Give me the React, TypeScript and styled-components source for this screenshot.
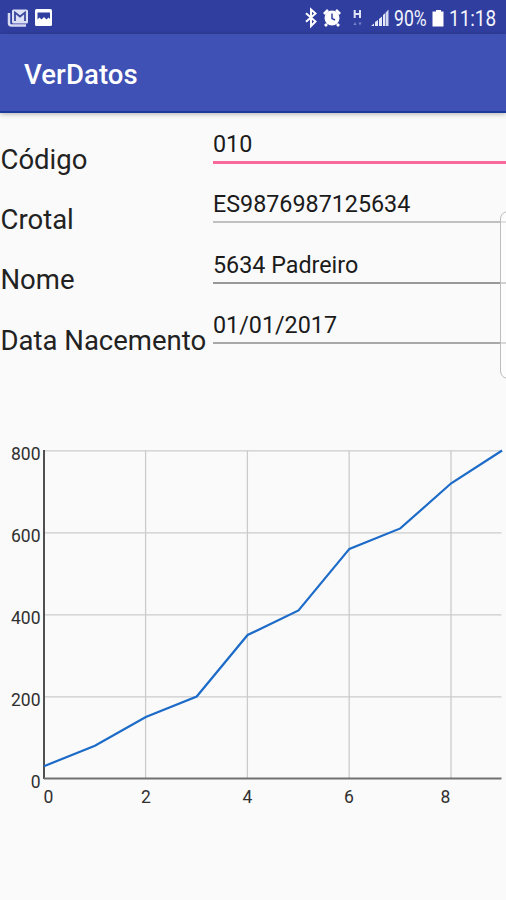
import React from 'react';
import styled, { createGlobalStyle } from 'styled-components';

const GlobalStyle = createGlobalStyle`
  * { box-sizing: border-box; }
  body { margin: 0; background: #fafafa; font-family: Roboto, sans-serif; }
`;

const Screen = styled.main`
  position: relative;
  width: 506px;
  height: 900px;
  overflow: hidden;
  background: #fafafa;
`;

const StatusBar = styled.header`
  display: flex;
  align-items: center;
  height: 34px;
  padding: 1px 10px 0 7px;
  background: #303f9f;
  color: #f3f4fc;
`;

const StatusIcons = styled.svg`
  display: block;
  flex: none;
`;

const Spacer = styled.div`
  flex: 1;
`;

const StatusText = styled.span<{ $width: number; $squeeze: number }>`
  width: ${(p) => p.$width}px;
  padding-top: 2px;
  font-size: 22px;
  line-height: 32px;
  white-space: nowrap;
  transform: scaleX(${(p) => p.$squeeze});
  transform-origin: left center;
`;

const AppBar = styled.div`
  display: flex;
  align-items: center;
  height: 79px;
  padding: 5px 24px 0;
  background: #3f51b5;
  border-bottom: 2px solid #1d3c9a;
  box-shadow: 0 1px 5px rgba(0, 0, 0, 0.3);
`;

const Title = styled.h1`
  margin: 0;
  color: #fff;
  font-size: 27.5px;
  font-weight: 500;
  line-height: 32px;
  letter-spacing: 0.1px;
`;

const Form = styled.form`
  display: grid;
  grid-template-columns: 213px 1fr;
  grid-auto-rows: 60.4px;
  height: 335px;
`;

const Label = styled.label`
  padding: 29.5px 0 0 0.5px;
  color: #222;
  font-size: 27.5px;
  line-height: 34px;
  white-space: nowrap;
`;

const Field = styled.div<{ $active?: boolean; $line: string }>`
  height: ${(p) => (p.$active ? 51 : 50)}px;
  padding-top: 17px;
  color: #1b1b1b;
  font-size: 23.3px;
  line-height: 28px;
  white-space: nowrap;
  border-bottom: ${(p) => (p.$active ? 3 : 2)}px solid ${(p) => p.$line};
`;

const EdgeHandle = styled.aside`
  position: absolute;
  top: 211px;
  left: 500px;
  width: 20px;
  height: 168px;
  border: 1px solid #bcbcbc;
  border-radius: 8px;
  background: rgba(255, 255, 255, 0.55);
`;

const Chart = styled.svg`
  display: block;
  overflow: visible;
  font-family: Roboto, sans-serif;
  font-size: 17.5px;
  fill: #303030;
`;

const fields = [
  { label: 'Código', value: '010', active: true, line: '#f9689a' },
  { label: 'Crotal', value: 'ES9876987125634', line: '#c0c0c0' },
  { label: 'Nome', value: '5634 Padreiro', line: '#999' },
  { label: 'Data Nacemento', value: '01/01/2017', line: '#a8a8a8' },
];

const weights = [30, 80, 150, 200, 350, 410, 560, 610, 720, 800];
const left = 44;
const bottom = 330.5;
const stepX = 50.9;
const scaleY = 0.41;
const points = weights.map((w, i) => `${left + i * stepX},${bottom - w * scaleY}`).join(' ');
const xLabels = [
  { text: '0', x: 48.5 },
  { text: '2', x: 146 },
  { text: '4', x: 247.5 },
  { text: '6', x: 349 },
  { text: '8', x: 445.5 },
];

function GrowthChart() {
  return (
    <Chart width="506" height="380" viewBox="0 0 506 380">
      <g stroke="#cbcbcb" strokeWidth="1.3">
        {[200, 400, 600, 800].map((v) => (
          <line key={v} x1={left} x2="501.5" y1={bottom - v * scaleY + 0.3} y2={bottom - v * scaleY + 0.3} />
        ))}
        {[2, 4, 6, 8].map((v) => (
          <line key={v} x1={left + v * stepX - 0.2} x2={left + v * stepX - 0.2} y1="2.5" y2={bottom} />
        ))}
      </g>
      <line x1={left} x2={left} y1="2" y2="331" stroke="#505050" strokeWidth="2" />
      <line x1={left} x2="501.5" y1={bottom} y2={bottom} stroke="#707070" strokeWidth="2" />
      <polyline points={points} fill="none" stroke="#1c6bc8" strokeWidth="2.2" />
      {[0, 200, 400, 600, 800].map((v) => (
        <text key={v} x="40.5" y={bottom - v * scaleY + 9.5} textAnchor="end">{v}</text>
      ))}
      {xLabels.map((l) => (
        <text key={l.text} x={l.x} y="355" textAnchor="middle">{l.text}</text>
      ))}
    </Chart>
  );
}

function NotificationIcons() {
  return (
    <StatusIcons width="48" height="34" viewBox="7 0 48 34">
      <path d="M9 12v10q0 2.500 2.500 2.500H26" fill="none" stroke="#d5d9f2" strokeWidth="2.500" />
      <rect x="12" y="8.500" width="16" height="14" rx="1.500" fill="#dce0f5" />
      <path d="M15 20v-8.500l5 4 5-4V20" fill="none" stroke="#3b499f" strokeWidth="1.800" />
      <rect x="35" y="8" width="17" height="17" rx="1.500" fill="#fff" />
      <path d="M37.500 11.500h12.500v6.500l-1.500-1.500-2 2-2.500-2.500-2.500 2.500-2-2-2 2z" fill="#303f9f" />
    </StatusIcons>
  );
}

function SystemIcons() {
  return (
    <StatusIcons width="91" height="34" viewBox="303 0 91 34">
      <path d="M306 12.200l9.500 8.300-4.500 4.500V8.500l4.500 4-9.500 8.300" fill="none" stroke="#fff" strokeWidth="2" />
      <circle cx="332" cy="17" r="7.500" fill="#fff" />
      <path d="M324 13l4-4M340 13l-4-4M327 23l-2 2M337 23l2 2" stroke="#fff" strokeWidth="2.800" />
      <path d="M332 12.500V17.500l3 1.500" fill="none" stroke="#303f9f" strokeWidth="1.500" />
      <path d="M354.700 9v8M360 9v8M354.500 13h5.500" fill="none" stroke="#e0e3f5" strokeWidth="2" />
      <path d="M353.500 24l1.500-3 1.500 3zM358.500 21.500h3l-1.500 3z" fill="#7d88c9" />
      <path d="M371 25l3-2.500V25zM375 25v-4l3-2v6zM379 25v-7l3-2.500V25zM383 25V14l2.300-2v13z" fill="#e4e7f6" />
      <path d="M385.800 25V11.500l2.700-3V25z" fill="#d5d9f2" />
    </StatusIcons>
  );
}

function BatteryIcon() {
  return (
    <StatusIcons width="18" height="34" viewBox="430 0 18 34">
      <path d="M435 9h5v1.500h2.500v15h-11v-15h3.500z" fill="#fff" />
    </StatusIcons>
  );
}

export default function App() {
  return (
    <Screen>
      <GlobalStyle />
      <StatusBar>
        <NotificationIcons />
        <Spacer />
        <SystemIcons />
        <StatusText $width={37} $squeeze={0.8}>90%</StatusText>
        <BatteryIcon />
        <StatusText $width={47} $squeeze={0.86}>11:18</StatusText>
      </StatusBar>
      <AppBar>
        <Title>VerDatos</Title>
      </AppBar>
      <Form>
        {fields.map((f) => (
          <React.Fragment key={f.label}>
            <Label>{f.label}</Label>
            <Field $active={f.active} $line={f.line}>{f.value}</Field>
          </React.Fragment>
        ))}
      </Form>
      <GrowthChart />
      <EdgeHandle />
    </Screen>
  );
}
